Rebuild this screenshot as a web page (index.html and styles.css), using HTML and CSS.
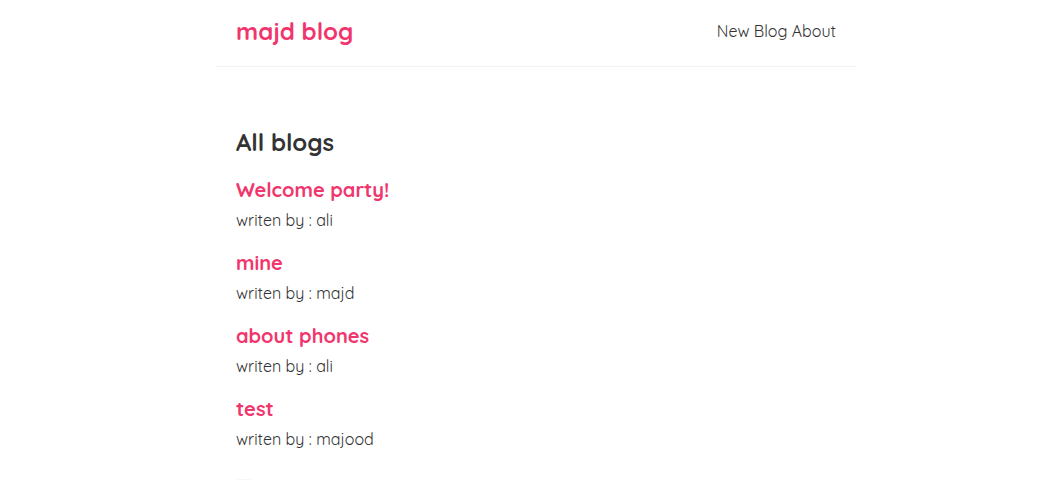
FILE: index.html
```html
<!DOCTYPE html>
<html lang="en">
<head>
<meta charset="utf-8">
<meta name="viewport" content="width=device-width, initial-scale=1">
<title>majd blog</title>
<link rel="stylesheet" href="styles.css">
</head>
<body>
<nav class="navbar">
  <h1 class="brand">majd blog</h1>
  <div class="links"><a href="#new">New Blog</a> <a href="#about">About</a></div>
</nav>
<main class="content">
  <h2 class="title">All blogs</h2>
  <article class="blog"><a href="#1"><h3>Welcome party!</h3><p>writen by : ali</p></a></article>
  <article class="blog"><a href="#2"><h3>mine</h3><p>writen by : majd</p></a></article>
  <article class="blog"><a href="#3"><h3>about phones</h3><p>writen by : ali</p></a></article>
  <article class="blog"><a href="#4"><h3>test</h3><p>writen by : majood</p></a></article>
  <hr class="rule">
</main>
</body>
</html>
```

FILE: styles.css
```css
* { box-sizing: border-box; margin: 0; }
body {
  padding-left: 9px;
  background: #fff;
  color: #333;
  font: 400 16px/20px Quicksand, Inter, sans-serif;
}
a { color: inherit; text-decoration: none; }
.navbar {
  display: flex;
  align-items: center;
  justify-content: space-between;
  max-width: 640px;
  margin: 0 auto;
  padding: 16px 20px 20px;
  border-bottom: 1px solid #f2f2f2;
}
.brand { color: #f1356d; font-size: 24px; line-height: 30px; font-weight: 700; }
.content { max-width: 600px; margin: 60px auto 0; }
.title { font-size: 24px; line-height: 30px; font-weight: 700; margin-bottom: 20px; }
.blog { margin-bottom: 20px; }
.blog h3 { color: #f1356d; font-size: 20px; line-height: 25px; font-weight: 700; margin-bottom: 8px; }
.rule { width: 16px; margin-top: 30px; border: 0; border-top: 1px solid #f8f8f8; }
```
